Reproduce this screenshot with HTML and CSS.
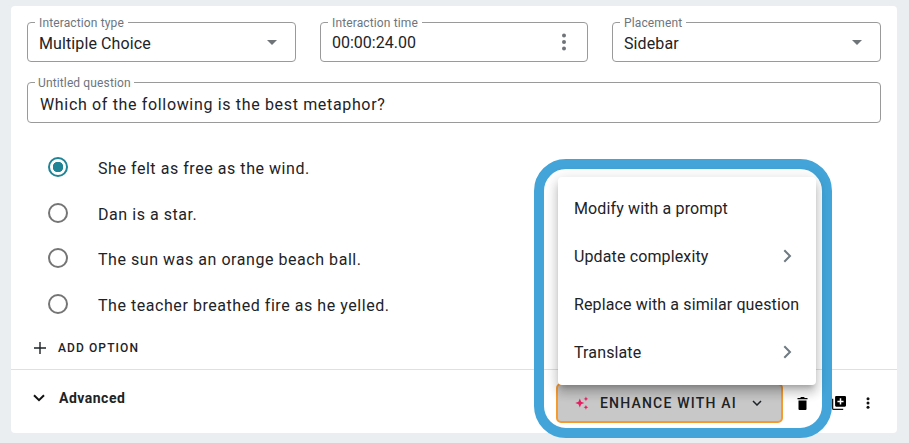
FILE: index.html
```html
<!DOCTYPE html>
<html lang="en">
<head>
<meta charset="utf-8">
<title>Question editor</title>
<link rel="stylesheet" href="styles.css">
</head>
<body>
<main class="card">
  <section class="form">
    <div class="row-fields">
      <div class="field"><span class="field-label">Interaction type</span><span class="field-value">Multiple Choice</span><svg class="caret" width="10" height="5" viewBox="0 0 10 5"><path d="M0 0h10L5 5z"/></svg></div>
      <div class="field"><span class="field-label">Interaction time</span><span class="field-value time">00:00:24.00</span><svg class="dots" width="6" height="18" viewBox="0 0 6 18"><circle cx="3" cy="2.500" r="2"/><circle cx="3" cy="9" r="2"/><circle cx="3" cy="15.500" r="2"/></svg></div>
      <div class="field"><span class="field-label">Placement</span><span class="field-value">Sidebar</span><svg class="caret" width="10" height="5" viewBox="0 0 10 5"><path d="M0 0h10L5 5z"/></svg></div>
    </div>
    <div class="field question"><span class="field-label">Untitled question</span><span class="field-value">Which of the following is the best metaphor?</span></div>
    <ul class="options">
      <li class="option"><span class="radio checked"></span>She felt as free as the wind.</li>
      <li class="option"><span class="radio"></span>Dan is a star.</li>
      <li class="option"><span class="radio"></span>The sun was an orange beach ball.</li>
      <li class="option"><span class="radio"></span>The teacher breathed fire as he yelled.</li>
    </ul>
    <div class="add-option"><svg width="12" height="12" viewBox="0 0 12 12"><path d="M6 0v12M0 6h12" stroke="#1d2327" stroke-width="1.400" fill="none"/></svg><span>ADD OPTION</span></div>
  </section>
  <footer class="footer">
    <div class="advanced"><svg width="12" height="8" viewBox="0 0 12 8"><path d="M1 1.200l5 5 5-5" stroke="#111" stroke-width="2" fill="none"/></svg><span>Advanced</span></div>
    <div class="actions">
      <div class="enhance">
        <svg width="14" height="14" viewBox="0 0 16 16"><path fill="#ec1c63" d="M5.500 2.800l1.500 3.700 3.700 1.500-3.700 1.500-1.500 3.700-1.500-3.700L.3 8l3.700-1.500zM12.500.6l.8 1.900 1.900.8-1.900.8-.8 1.900-.8-1.900-1.900-.8 1.900-.8zM12.500 10.200l.8 1.900 1.900.8-1.900.8-.8 1.900-.8-1.900-1.900-.8 1.900-.8z"/></svg>
        <span>ENHANCE WITH AI</span>
        <svg class="enhance-chevron" width="10" height="6" viewBox="0 0 10 6"><path d="M1 1l4 4 4-4" stroke="#1d2327" stroke-width="1.500" fill="none"/></svg>
      </div>
      <svg class="trash" width="11" height="13" viewBox="0 0 11 13"><path d="M1.500 3.500h8V12a1 1 0 0 1-1 1h-6a1 1 0 0 1-1-1zM.5 1h2.700l.8-1h3l.8 1h2.700v1.300H.5z"/></svg>
      <svg class="dup" width="14" height="14" viewBox="0 0 15 15"><path d="M0.700 3v10.300a1 1 0 0 0 1 1H12" fill="none" stroke="#111" stroke-width="1.300"/><path fill-rule="evenodd" d="M4.500 0h9.300a1.200 1.200 0 0 1 1.200 1.200v9.100a1.200 1.200 0 0 1-1.200 1.200H4.500a1.200 1.200 0 0 1-1.200-1.200V1.200A1.200 1.200 0 0 1 4.500 0zM8.300 2.500v2.500H5.800v1.600h2.500v2.500h1.600V6.600h2.500V5H9.900V2.500z"/></svg>
      <svg class="more" width="4" height="12" viewBox="0 0 4 12"><circle cx="2" cy="1.700" r="1.500"/><circle cx="2" cy="6" r="1.500"/><circle cx="2" cy="10.300" r="1.500"/></svg>
    </div>
  </footer>
  <div class="highlight"></div>
  <nav class="menu">
    <div class="menu-item">Modify with a prompt</div>
    <div class="menu-item">Update complexity<svg width="9" height="14" viewBox="0 0 9 14"><path d="M1.300 1.200L7 7l-5.700 5.800" stroke="#6f7a82" stroke-width="2" fill="none"/></svg></div>
    <div class="menu-item">Replace with a similar question</div>
    <div class="menu-item">Translate<svg width="9" height="14" viewBox="0 0 9 14"><path d="M1.300 1.200L7 7l-5.700 5.800" stroke="#6f7a82" stroke-width="2" fill="none"/></svg></div>
  </nav>
</main>
</body>
</html>
```
FILE: styles.css
```css
* { box-sizing: border-box; }
html, body { margin: 0; height: 100%; }
body {
  background: #eaeef1;
  font-family: Roboto, "Liberation Sans", sans-serif;
  color: #1d2327;
  overflow: hidden;
  padding: 6px 12px 10px 11px;
}
.card {
  position: relative;
  background: #fff;
  border-radius: 4px;
  height: 427px;
  display: flex;
  flex-direction: column;
}
.form { padding: 16px 16px 0; flex: 1; }
.row-fields { display: grid; grid-template-columns: 269px 268px 269px; column-gap: 24px; }
.field {
  position: relative;
  height: 40px;
  border: 1px solid #9a9a9a;
  border-radius: 4px;
  display: flex;
  align-items: center;
  justify-content: space-between;
  padding: 0 18px 0 11px;
}
.field-label {
  position: absolute;
  top: -6px;
  left: 7px;
  padding: 0 4px;
  background: #fff;
  font-size: 12px;
  line-height: 12px;
  letter-spacing: 0.13px;
  color: #6c757d;
}
.field-value { font-size: 16px; line-height: 20px; letter-spacing: 0.1px; padding-top: 4px; }
.field-value.time { padding-top: 2px; letter-spacing: 0; }
.caret { fill: #6f7479; }
.dots { fill: #6f7479; margin-right: 2px; }
.question { margin-top: 20px; height: 41px; padding-left: 12px; }
.question .field-value { letter-spacing: 0.66px; }
.question .field-label { left: 7px; padding: 0 3px; }
.options { list-style: none; margin: 23px 0 0; padding: 0; }
.option {
  display: flex;
  align-items: center;
  height: 45.500px;
  font-size: 16px;
  letter-spacing: 0.55px;
  padding-left: 21px;
}
.radio {
  width: 20px;
  height: 20px;
  border: 2px solid #757575;
  border-radius: 50%;
  margin: 0 30px 3px 0;
  flex: none;
}
.radio.checked { border-color: #1f8496; background: radial-gradient(circle, #1f8496 0 5px, #fff 5.500px); }
.add-option {
  display: flex;
  align-items: center;
  margin: 10px 0 0 7px;
  height: 20px;
  font-size: 12px;
  font-weight: 500;
  letter-spacing: 1.100px;
}
.add-option span { margin-left: 12px; }
.footer {
  height: 64px;
  border-top: 1px solid #e0e0e0;
  display: flex;
  justify-content: space-between;
  padding: 0 0 0 22px;
}
.advanced {
  display: flex;
  align-items: center;
  gap: 14px;
  height: 56px;
  font-size: 14px;
  font-weight: 700;
  letter-spacing: 0.5px;
  color: #1d2327;
}
.actions { display: flex; align-items: center; height: 66px; padding-right: 27px; }
.enhance {
  display: flex;
  align-items: center;
  width: 227px;
  height: 40px;
  background: #c8c8c8;
  border: 2px solid #f79a2e;
  border-radius: 5px;
  padding-left: 17px;
  font-size: 14px;
  font-weight: 500;
  letter-spacing: 1.200px;
}
.enhance span { margin-left: 11px; }
.enhance-chevron { margin-left: 15px; }
.trash { margin-left: 14px; fill: #000; }
.dup { margin-left: 24px; fill: #000; }
.more { margin-left: 20px; fill: #111; }
.highlight {
  position: absolute;
  left: 523px;
  top: 153px;
  width: 298px;
  height: 279px;
  border: 10px solid #42a4d8;
  border-radius: 32px;
  pointer-events: none;
}
.menu {
  position: absolute;
  left: 547px;
  top: 171px;
  width: 258px;
  height: 208px;
  background: #fff;
  border-radius: 4px;
  box-shadow: 0 5px 5px -3px rgba(0,0,0,.2), 0 8px 10px 1px rgba(0,0,0,.14), 0 3px 14px 2px rgba(0,0,0,.12);
  padding: 7px 0;
}
.menu-item {
  display: flex;
  align-items: center;
  justify-content: space-between;
  height: 48px;
  padding: 0 24px 0 16px;
  font-size: 16px;
  letter-spacing: 0.13px;
  white-space: nowrap;
}
```
